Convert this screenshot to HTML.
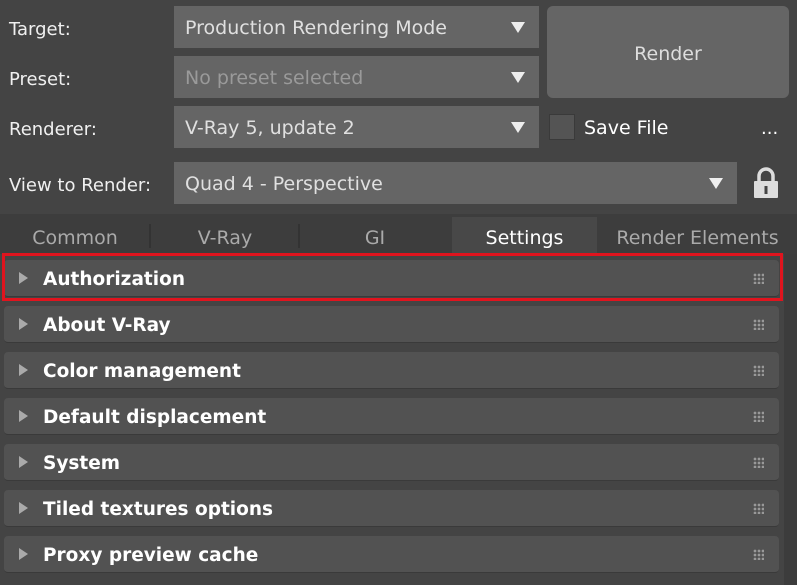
<!DOCTYPE html><html><head><style>
body{margin:0;width:797px;height:585px;background:#444;font-family:"DejaVu Sans","Liberation Sans",sans-serif;position:relative;overflow:hidden;color:#e8e8e8}
.a{position:absolute}
.lbl{font-size:18px;color:#f0f0f0}
.dd{position:absolute;background:#656565;font-size:19px;color:#e0e0e0;box-sizing:border-box;padding-left:11px;line-height:45px}
.tri{position:absolute;width:0;height:0;border-left:7px solid transparent;border-right:7px solid transparent;border-top:11px solid #eee}
.tab{position:absolute;top:216px;height:37px;line-height:45px;font-size:19px;color:#aaa;text-align:center}
.sep{position:absolute;top:224px;width:2px;height:24px;background:#333}
.ro{position:absolute;left:4px;width:775px;height:37px;background:#525252;border-radius:4px;border-bottom:1px solid #3a3a3a;font-weight:bold;font-size:18.5px;color:#fff;line-height:39px;box-sizing:border-box;padding-left:39px}
.ro:before{content:"";position:absolute;left:15px;top:12px;border-top:6px solid transparent;border-bottom:6px solid transparent;border-left:9px solid #aaa}
.ro i{position:absolute;right:15px;top:13px;width:11px;height:11px;background-image:radial-gradient(#999 45%,transparent 50%);background-size:4px 4px}
</style></head><body>
<div class="a lbl" style="left:9px;top:19px">Target:</div>
<div class="a lbl" style="left:9px;top:69px">Preset:</div>
<div class="a lbl" style="left:9px;top:119px">Renderer:</div>
<div class="a lbl" style="left:9px;top:175px">View to Render:</div>
<div class="dd" style="left:174px;top:6px;width:365px;height:42px">Production Rendering Mode<div class="tri" style="right:14px;top:16px"></div></div>
<div class="dd" style="left:174px;top:56px;width:365px;height:42px;color:#9a9a9a">No preset selected<div class="tri" style="right:14px;top:16px"></div></div>
<div class="dd" style="left:174px;top:106px;width:365px;height:42px">V-Ray 5, update 2<div class="tri" style="right:14px;top:16px"></div></div>
<div class="dd" style="left:174px;top:162px;width:563px;height:42px">Quad 4 - Perspective<div class="tri" style="right:14px;top:16px"></div></div>
<div class="a" style="left:547px;top:6px;width:242px;height:92px;background:#656565;border-radius:6px;text-align:center;line-height:96px;font-size:19px;color:#ddd">Render</div>
<div class="a" style="left:549px;top:114px;width:26px;height:26px;background:#545454;border:1px solid #3a3a3a;box-sizing:border-box"></div>
<div class="a" style="left:584px;top:117px;font-size:19px;color:#fff">Save File</div>
<div class="a" style="left:761px;top:118px;font-size:18px;color:#fff">...</div>
<svg class="a" style="left:753px;top:167px" width="26" height="32"><path d="M6 14V9a7 7 0 0 1 14 0v5" stroke="#ddd" stroke-width="3.5" fill="none"/><rect x="1" y="14" width="24" height="17" rx="1" fill="#ddd"/><rect x="11.5" y="19" width="3" height="8" fill="#444"/></svg>
<div class="a" style="left:0;top:214px;width:797px;height:40px;background:#3d3d3d"></div>
<div class="a" style="left:452px;top:217px;width:145px;height:37px;background:#484848"></div>
<div class="tab" style="left:0;width:150px">Common</div>
<div class="sep" style="left:149px"></div>
<div class="tab" style="left:150px;width:150px">V-Ray</div>
<div class="sep" style="left:298px"></div>
<div class="tab" style="left:300px;width:150px">GI</div>
<div class="tab" style="left:452px;width:145px;color:#fff">Settings</div>
<div class="tab" style="left:605px;width:185px">Render Elements</div>
<div class="a" style="left:784px;top:254px;width:13px;height:331px;background:#3c3c3c"></div>
<div class="ro" style="top:260px">Authorization<i></i></div>
<div class="ro" style="top:306px">About V-Ray<i></i></div>
<div class="ro" style="top:352px">Color management<i></i></div>
<div class="ro" style="top:398px">Default displacement<i></i></div>
<div class="ro" style="top:444px">System<i></i></div>
<div class="ro" style="top:490px">Tiled textures options<i></i></div>
<div class="ro" style="top:536px">Proxy preview cache<i></i></div>
<div class="a" style="left:2px;top:253px;width:781px;height:48px;border:3px solid #e0141e;box-sizing:border-box"></div>
</body></html>
